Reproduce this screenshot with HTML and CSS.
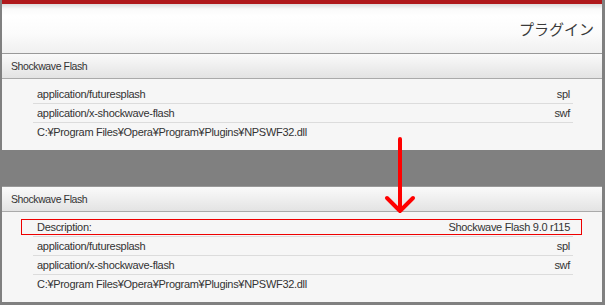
FILE: index.html
```html
<!DOCTYPE html>
<html lang="ja">
<head>
    <meta charset="UTF-8">
    <meta name="viewport" content="width=device-width, initial-scale=1.0">
    <title>プラグイン</title>
    <link rel="stylesheet" href="styles.css">
</head>
<body>

    <!-- Before -->
    <div class="shot">
        <div class="topbar"></div>
        <div class="page-head">
            <h1>プラグイン</h1>
        </div>
        <div class="plugin">
            <div class="plugin-name">Shockwave Flash</div>
            <ul class="mime-list">
                <li><span>application/futuresplash</span><span>spl</span></li>
                <li><span>application/x-shockwave-flash</span><span>swf</span></li>
                <li class="path"><span>C:¥Program Files¥Opera¥Program¥Plugins¥NPSWF32.dll</span></li>
            </ul>
        </div>
    </div>

    <!-- After -->
    <div class="shot shot-after">
        <div class="plugin">
            <div class="plugin-name">Shockwave Flash</div>
            <ul class="mime-list">
                <li class="desc"><span>Description:</span><span>Shockwave Flash 9.0 r115</span></li>
                <li><span>application/futuresplash</span><span>spl</span></li>
                <li><span>application/x-shockwave-flash</span><span>swf</span></li>
                <li class="path"><span>C:¥Program Files¥Opera¥Program¥Plugins¥NPSWF32.dll</span></li>
            </ul>
        </div>
    </div>

    <svg class="arrow" width="40" height="90" viewBox="0 0 40 90">
        <path d="M20 9 V81 M7 68 L20 81 L33 68" fill="none" stroke="#f00" stroke-width="4" stroke-linecap="round" stroke-linejoin="round"/>
    </svg>

</body>
</html>
```

FILE: styles.css
```css
body {
    margin: 0;
    padding: 0;
    background-color: #808080;
    font-family: "Liberation Sans", Arial, sans-serif;
    color: #333;
    position: relative;
    height: 305px;
    overflow: hidden;
}
.shot {
    margin: 0 3px 0 2px;
    background-color: #f6f6f6;
}
.shot-after {
    margin-top: 36px;
}
.topbar {
    height: 4px;
    background-color: #b0191c;
}
.page-head {
    height: 49px;
    background: linear-gradient(#dcdcdc 0, #fafafa 5px, #fff 12px, #fbfbfb 60%, #f0f0f0 100%);
    display: flex;
    align-items: center;
    justify-content: flex-end;
    padding-right: 8px;
}
.page-head h1 {
    margin: 0;
    font-family: "Noto Sans CJK JP", sans-serif;
    font-weight: normal;
    font-size: 15px;
    color: #3a3a3a;
}
.plugin {
    padding-bottom: 9px;
}
.plugin-name {
    height: 24px;
    line-height: 24px;
    padding-left: 9px;
    font-size: 10.5px;
    letter-spacing: -0.4px;
    border-top: 1px solid #999;
    border-bottom: 1px solid #aaa;
    background: linear-gradient(#fafafa, #e3e3e3);
}
.mime-list {
    list-style: none;
    margin: 0 29px 0 31px;
    padding: 6px 0 0;
}
.mime-list li {
    position: relative;
    height: 18px;
    line-height: 18px;
    padding: 0 3px 0 4px;
    display: flex;
    justify-content: space-between;
    font-size: 11px;
    letter-spacing: -0.3px;
    border-bottom: 1px solid #dcdcdc;
}
.mime-list li.path {
    border-bottom: none;
}
.mime-list li.desc::after {
    content: "";
    position: absolute;
    top: 1px;
    bottom: 1px;
    left: -12px;
    right: -9px;
    border: 1px solid #e00;
}
.arrow {
    position: absolute;
    left: 380px;
    top: 130px;
}
```
